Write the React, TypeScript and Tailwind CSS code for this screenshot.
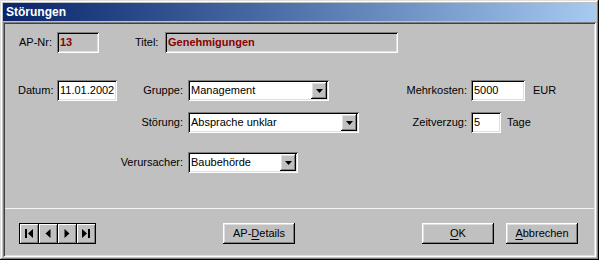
import React from "react";

const raised =
  "shadow-[inset_-1px_-1px_#000,inset_1px_1px_#fff,inset_-2px_-2px_#808080,inset_2px_2px_#dfdfdf]";
const sunken =
  "shadow-[inset_1px_1px_#808080,inset_-1px_-1px_#fff,inset_2px_2px_#000,inset_-2px_-2px_#dfdfdf]";

function Field({ w, value, gray, bold }: { w: string; value: string; gray?: boolean; bold?: boolean }) {
  return (
    <div
      className={`${w} h-[21px] ${sunken} ${gray ? "bg-[#c0c0c0]" : "bg-white"} flex items-center pl-[3px] ${
        bold ? "font-bold text-[#8b0000]" : "text-black"
      }`}
    >
      {value}
    </div>
  );
}

function Arrow() {
  return (
    <svg width="7" height="4" viewBox="0 0 7 4">
      <path d="M0 0H7L3.5 4Z" fill="#000" />
    </svg>
  );
}

function Combo({ w, value }: { w: string; value: string }) {
  return (
    <div className={`${w} h-[21px] ${sunken} bg-white flex items-stretch p-[2px]`}>
      <div className="flex-1 flex items-center pl-[1px]">{value}</div>
      <div className={`w-[16px] bg-[#c0c0c0] ${raised} flex items-center justify-center`}>
        <Arrow />
      </div>
    </div>
  );
}

function Btn({ children, ml }: { children: React.ReactNode; ml: string }) {
  return (
    <div className={`${ml} w-[72px] h-[21px] bg-[#c0c0c0] ${raised} flex items-center justify-center`}>
      {children}
    </div>
  );
}

function NavIcon({ kind }: { kind: "first" | "prev" | "next" | "last" }) {
  return (
    <svg width="10" height="11" viewBox="0 0 10 11">
      {kind === "first" && (
        <>
          <rect x="1" y="1" width="2" height="9" fill="#000" />
          <path d="M9 1V10L4 5.5Z" fill="#000" />
        </>
      )}
      {kind === "prev" && <path d="M7.5 1V10L2.5 5.5Z" fill="#000" />}
      {kind === "next" && <path d="M2.5 1V10L7.5 5.5Z" fill="#000" />}
      {kind === "last" && (
        <>
          <path d="M1 1V10L6 5.5Z" fill="#000" />
          <rect x="7" y="1" width="2" height="9" fill="#000" />
        </>
      )}
    </svg>
  );
}

export default function App() {
  return (
    <div
      className="w-[599px] h-[260px] bg-[#c0c0c0] p-[3px] flex flex-col shadow-[inset_-1px_-1px_#000,inset_1px_1px_#dfdfdf,inset_-2px_-2px_#808080,inset_2px_2px_#fff] text-[11px] text-black"
      style={{ fontFamily: '"Liberation Sans", Arial, sans-serif' }}
    >
      <div className="h-[18px] bg-gradient-to-r from-[#0a246a] to-[#a6caf0] flex items-center pl-[3px] text-white font-bold text-[12px]">
        Störungen
      </div>
      <div className={`mt-[1px] flex-1 flex flex-col p-[2px] shadow-[inset_1px_1px_#808080,inset_-1px_-1px_#fff,inset_2px_2px_#404040,inset_-2px_-2px_#dfdfdf]`}>
        <div className="h-[184px] flex flex-col">
          {/* Row 1 */}
          <div className="mt-[8px] flex items-center">
            <div className="w-[52px] pl-[14px]">AP-Nr:</div>
            <Field w="w-[42px]" value="13" gray bold />
            <div className="w-[66px] pl-[36px]">Titel:</div>
            <Field w="w-[233px]" value="Genehmigungen" gray bold />
          </div>
          {/* Row 2 */}
          <div className="mt-[27px] flex items-center">
            <div className="w-[52px] pl-[13px]">Datum:</div>
            <Field w="w-[60px]" value="11.01.2002" />
            <div className="w-[71px] text-right pr-[5px]">Gruppe:</div>
            <Combo w="w-[141px]" value="Management" />
            <div className="w-[142px] text-right pr-[4px]">Mehrkosten:</div>
            <Field w="w-[54px]" value="5000" />
            <div className="ml-[8px]">EUR</div>
          </div>
          {/* Row 3 */}
          <div className="mt-[11px] flex items-center">
            <div className="w-[183px] text-right pr-[5px]">Störung:</div>
            <Combo w="w-[171px]" value="Absprache unklar" />
            <div className="w-[112px] text-right pr-[4px]">Zeitverzug:</div>
            <Field w="w-[30px]" value="5" />
            <div className="ml-[6px]">Tage</div>
          </div>
          {/* Row 4 */}
          <div className="mt-[19px] flex items-center">
            <div className="w-[183px] text-right pr-[5px]">Verursacher:</div>
            <Combo w="w-[110px]" value="Baubehörde" />
          </div>
        </div>
        <div className="h-px bg-[#f4f4f4]" />
        <div className="flex-1 flex items-start pl-[14px] pt-[14px]">
          <div className="flex border border-black h-[21px]">
            {(["first", "prev", "next", "last"] as const).map((k, i) => (
              <div
                key={k}
                className={`${i > 0 ? "w-[19px] border-l border-black" : "w-[18px]"} h-[19px] bg-[#c0c0c0] shadow-[inset_1px_1px_#fff,inset_-1px_-1px_#808080] flex items-center justify-center`}
              >
                <NavIcon kind={k} />
              </div>
            ))}
          </div>
          <Btn ml="ml-[127px]">
            <span>
              AP-<u className="underline-offset-2">D</u>etails
            </span>
          </Btn>
          <Btn ml="ml-[127px]">
            <span>
              <u className="underline-offset-2">O</u>K
            </span>
          </Btn>
          <Btn ml="ml-[12px]">
            <span>
              <u className="underline-offset-2">A</u>bbrechen
            </span>
          </Btn>
        </div>
      </div>
    </div>
  );
}
